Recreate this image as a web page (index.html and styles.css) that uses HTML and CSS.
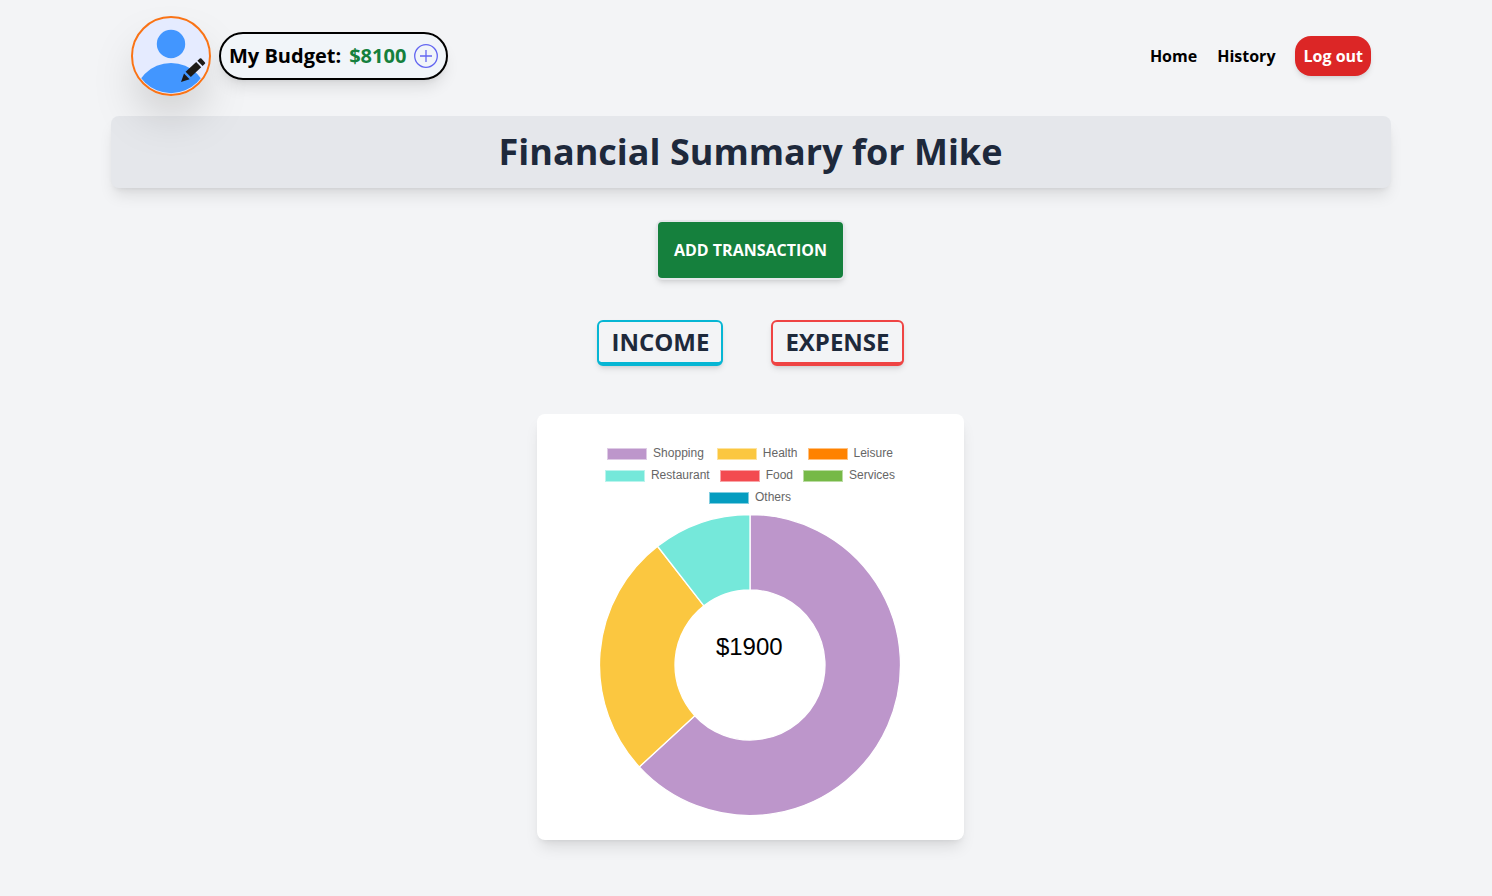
FILE: index.html
```html
<!DOCTYPE html>
<html lang="en">
<head>
<meta charset="utf-8">
<title>Financial Summary</title>
<link rel="stylesheet" href="styles.css">
</head>
<body>
<div class="page">
  <header class="nav">
    <div class="account">
      <div class="avatar">
        <svg viewBox="0 0 80 80" width="80" height="80">
          <clipPath id="face"><circle cx="40" cy="40" r="37.2"/></clipPath>
          <circle cx="40" cy="40" r="39" fill="#f8f9ff"/>
          <circle cx="40" cy="40" r="38.2" fill="#e5ebff"/>
          <circle cx="40" cy="28" r="14.2" fill="#4296ff"/>
          <circle cx="40" cy="84.2" r="37.2" fill="#4296ff" clip-path="url(#face)"/>
          <circle cx="40" cy="40" r="39" fill="none" stroke="#f97316" stroke-width="2"/>
          <g fill="#1d1a17">
            <path d="M50 66 53 57.4 58.6 63.2Z"/>
            <path d="M54.6 55.8 65.2 46 70.2 51.2 59.8 61Z"/>
            <path d="M66.4 44.8 68.8 42.6Q69.6 41.8 70.4 42.6L74 46.4Q74.6 47.2 73.9 47.8L71.6 50Z"/>
          </g>
        </svg>
      </div>
      <div class="budget">
        <span>My Budget:</span>
        <span class="amount">$8100</span>
        <svg class="plus" viewBox="0 0 24 24" width="24" height="24"><circle cx="12" cy="12" r="11.3"/><path d="M12 6v12M6 12h12"/></svg>
      </div>
    </div>
    <nav class="links">
      <a>Home</a>
      <a>History</a>
      <button class="logout">Log out</button>
    </nav>
  </header>
  <h1 class="title">Financial Summary for Mike</h1>
  <main class="content">
    <button class="add">ADD TRANSACTION</button>
    <div class="tabs">
      <button class="tab income">INCOME</button>
      <button class="tab expense">EXPENSE</button>
    </div>
    <section class="card">
      <div class="legend">
        <div class="row">
          <span class="item shopping">Shopping</span>
          <span class="item health">Health</span>
          <span class="item leisure">Leisure</span>
        </div>
        <div class="row">
          <span class="item restaurant">Restaurant</span>
          <span class="item food">Food</span>
          <span class="item services">Services</span>
        </div>
        <div class="row">
          <span class="item others">Others</span>
        </div>
      </div>
      <svg class="chart" viewBox="0 0 302 302" width="302" height="302">
        <g stroke="#fff" stroke-width="1.3">
          <path fill="#bd96cb" d="M151 .5A150.5 150.5 0 1 1 40.26 252.92L95.81 201.79A75 75 0 1 0 151 76Z"/>
          <path fill="#fbc740" d="M40.26 252.92A150.5 150.5 0 0 1 58.56 32.24L104.93 91.82A75 75 0 0 0 95.81 201.79Z"/>
          <path fill="#75e8da" d="M58.56 32.24A150.5 150.5 0 0 1 151 .5V76A75 75 0 0 0 104.93 91.82Z"/>
        </g>
        <text x="150.3" y="141" text-anchor="middle">$1900</text>
      </svg>
    </section>
  </main>
</div>
</body>
</html>
```
FILE: styles.css
```css
* { box-sizing: border-box; }
body { margin: 0; background: #f3f4f6; color: #000; font-family: "Open Sans", "Noto Sans", sans-serif; overflow: hidden; }
button { font: inherit; border: 0; margin: 0; display: block; }
svg { display: block; }
.page { width: 1280px; margin-left: 111px; height: 896px; }
.nav { position: relative; z-index: 1; height: 112px; padding: 16px 20px; display: flex; align-items: center; justify-content: space-between; }
.account { display: flex; align-items: center; gap: 8px; }
.avatar { width: 80px; height: 80px; border-radius: 50%; box-shadow: 0 25px 50px -12px rgba(0,0,0,.25); }
.budget { height: 48px; padding: 0 8px; display: flex; align-items: center; gap: 8px; border: 2px solid #000; border-radius: 24px; background: #f1f5f9; font-size: 20px; line-height: 28px; font-weight: 700; box-shadow: 0 10px 15px -3px rgba(0,0,0,.1), 0 4px 6px -4px rgba(0,0,0,.1); }
.amount { color: #15803d; }
.plus { fill: none; stroke: #6366f1; stroke-width: 1.3; }
.links { display: flex; align-items: center; gap: 20px; font-size: 16px; line-height: 24px; font-weight: 700; }
.logout { padding: 8px; color: #fff; background: #dc2626; border-radius: 16px; box-shadow: 0 4px 6px -1px rgba(0,0,0,.1), 0 2px 4px -2px rgba(0,0,0,.1); }
.title { margin: 4px 0 0; padding: 16px 17px 16px 16px; border-radius: 8px; background: #e5e7eb; color: #1e293b; text-align: center; font-size: 36px; line-height: 40px; font-weight: 700; box-shadow: 0 10px 15px -3px rgba(0,0,0,.1), 0 4px 6px -4px rgba(0,0,0,.1); }
.content { padding: 32px 1px 0 0; display: flex; flex-direction: column; align-items: center; }
.add { padding: 16px; border: 2px solid #e5e7eb; border-radius: 6px; background: #15803d; color: #fff; font-size: 16px; line-height: 24px; font-weight: 700; box-shadow: 0 4px 6px -1px rgba(0,0,0,.1), 0 2px 4px -2px rgba(0,0,0,.1); }
.tabs { margin-top: 40px; display: flex; gap: 48px; }
.tab { padding: 4px 12px; border: 2px solid; border-bottom-width: 4px; border-radius: 6px; background: #f3f4f6; color: #1e293b; font-size: 24px; line-height: 32px; font-weight: 700; box-shadow: 0 4px 6px -1px rgba(0,0,0,.1), 0 2px 4px -2px rgba(0,0,0,.1); }
.income { border-color: #06b6d4; }
.expense { border-color: #ef4444; }
.card { margin-top: 48px; width: 427px; height: 426px; padding: 28px 1px 0 0; display: flex; flex-direction: column; align-items: center; border-radius: 8px; background: #fff; box-shadow: 0 10px 15px -3px rgba(0,0,0,.1), 0 4px 6px -4px rgba(0,0,0,.1); }
.legend { font: 12px/22px "Liberation Sans", Arial, sans-serif; color: #666; height: 72px; }
.row { height: 22px; display: flex; justify-content: center; gap: 10px; }
.item { display: flex; gap: 6px; }
.item::before { content: ""; box-sizing: border-box; width: 40px; height: 12px; margin-top: 6px; border: 1px solid rgba(255,255,255,.5); }
.shopping { margin-right: 3px; }
.shopping::before { background: #bd96cb; }
.health::before { background: #fbc740; }
.leisure::before { background: #ff8200; }
.restaurant::before { background: #75e8da; }
.food::before { background: #f34b50; }
.services::before { background: #76b947; }
.others::before { background: #059dc0; }
.chart text { font: 24px "Liberation Sans", Arial, sans-serif; fill: #000; }
```
